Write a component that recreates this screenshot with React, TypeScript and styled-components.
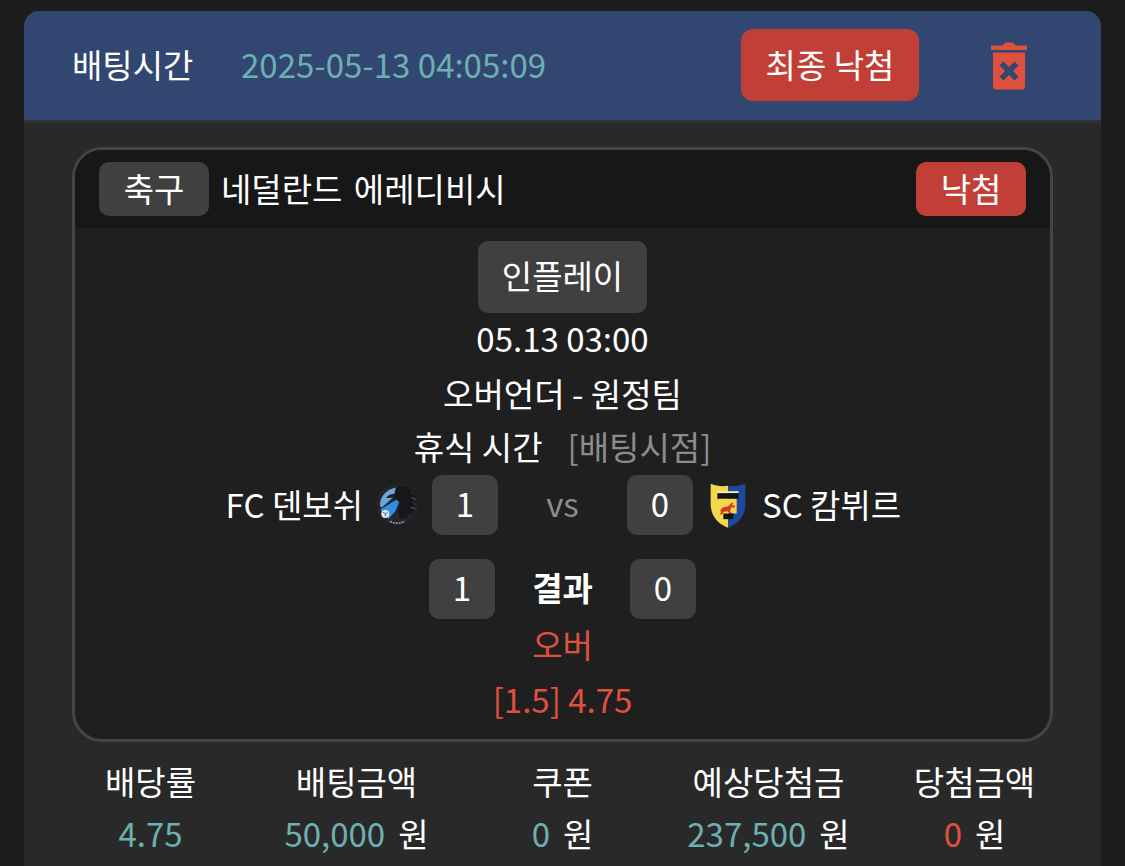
import React from "react";
import styled, { createGlobalStyle } from "styled-components";

const GlobalStyle = createGlobalStyle`
  html, body {
    margin: 0;
    height: 866px;
    overflow: hidden;
    background: #1c1c1c;
    color: #fff;
    font-family: "Noto Sans CJK KR", "Noto Sans", sans-serif;
    font-weight: 400;
  }
`;

const Page = styled.div`
  padding: 11px 24px 0;
`;

const Card = styled.div`
  background: #292929;
  border-radius: 15px 15px 0 0;
  height: 855px;
`;

const Header = styled.div`
  display: flex;
  align-items: center;
  height: 109px;
  padding: 0 72px 0 48px;
  background: #324672;
  border-radius: 15px 15px 0 0;
  border-bottom: 3px solid #333;
  font-size: 33px;
`;

const HeaderTitle = styled.span`
  width: 169px;
  padding-bottom: 4px;
`;

const HeaderTime = styled.span`
  flex: 1;
  padding-bottom: 4px;
  color: #6db0b0;
`;

const SettleButton = styled.div`
  display: flex;
  align-items: center;
  justify-content: center;
  box-sizing: border-box;
  width: 178px;
  height: 72px;
  margin: 0 70px 1px 0;
  padding-bottom: 3px;
  background: #c23f37;
  border-radius: 12px;
`;

const Match = styled.div`
  margin: 24px 48px 0;
  border: 3px solid #444;
  border-radius: 30px;
  background: #1f1f1f;
  overflow: hidden;
  height: 589px;
`;

const MatchTop = styled.div`
  display: flex;
  align-items: center;
  height: 78px;
  padding: 0 24px;
  background: #171717;
  font-size: 33px;
`;

const Tag = styled.div<{ $red?: boolean }>`
  display: flex;
  align-items: center;
  justify-content: center;
  box-sizing: border-box;
  width: 110px;
  height: 54px;
  padding-bottom: 3px;
  border-radius: 10px;
  background: ${(p) => (p.$red ? "#c23f37" : "#404040")};
`;

const League = styled.span`
  flex: 1;
  margin-left: 12px;
  padding-bottom: 3px;
  word-spacing: 4px;
`;

const MatchBody = styled.div`
  display: flex;
  flex-direction: column;
  align-items: center;
  padding-top: 13px;
  font-size: 33px;
`;

const PlayBadge = styled.div`
  display: flex;
  align-items: center;
  justify-content: center;
  box-sizing: border-box;
  width: 169px;
  height: 72px;
  padding-bottom: 4px;
  border-radius: 10px;
  background: #404040;
`;

const Line = styled.div<{ $red?: boolean }>`
  height: 53px;
  line-height: 53px;
  color: ${(p) => (p.$red ? "#e0503f" : "#fff")};
`;

const PlayDate = styled(Line)`
  margin-top: -1px;
  margin-bottom: 2px;
`;

const Muted = styled.span`
  margin-left: 25px;
  color: #8c8c8c;
`;

const ScoreRow = styled.div<{ $mid: number }>`
  display: grid;
  grid-template-columns: 1fr 66px ${(p) => p.$mid}px 66px 1fr;
  align-items: center;
  width: 100%;
  height: 60px;
  margin-top: 2px;
`;

const Score = styled.div`
  display: flex;
  align-items: center;
  justify-content: center;
  box-sizing: border-box;
  height: 60px;
  padding-bottom: 4px;
  border-radius: 10px;
  background: #404040;
`;

const Vs = styled.div`
  padding-bottom: 4px;
  text-align: center;
  color: #8c8c8c;
`;

const ResultLabel = styled.div`
  padding-bottom: 4px;
  text-align: center;
  font-weight: 700;
`;

const Team = styled.div<{ $right?: boolean }>`
  display: flex;
  align-items: center;
  justify-content: ${(p) => (p.$right ? "flex-start" : "flex-end")};
  gap: ${(p) => (p.$right ? "16px" : "13px")};
  padding: ${(p) => (p.$right ? "0 0 0 17px" : "0 14px 0 0")};
`;

const TeamName = styled.span`
  padding-bottom: 3px;
`;

const ResultRow = styled(ScoreRow)`
  margin-top: 24px;
`;

const Pick = styled(Line)`
  margin-top: -1px;
  margin-bottom: 2px;
`;

const Stats = styled.div`
  display: grid;
  grid-template-columns: repeat(5, 206px);
  justify-content: center;
  margin-top: 11px;
  font-size: 33px;
  text-align: center;
`;

const StatLabel = styled.div`
  height: 53px;
  line-height: 56px;
`;

const StatValue = styled.div<{ $red?: boolean }>`
  height: 54px;
  line-height: 54px;
  span {
    color: ${(p) => (p.$red ? "#e0503f" : "#6db0b0")};
  }
`;

const Unit = styled.span`
  margin-left: 13px;
  color: #fff !important;
`;

const TrashIcon = () => (
  <svg width="40" height="50" viewBox="0 0 40 50">
    <path
      d="M2 4.500h11.500C14.500 2.500 16 1.500 18 1.500h4c2 0 3.500 1 4.500 3H38v4.500H2z"
      fill="#e0503f"
    />
    <path
      d="M4 11.500h32V45a3.500 3.500 0 0 1-3.500 3.500h-25A3.500 3.500 0 0 1 4 45z"
      fill="#e0503f"
    />
    <path
      d="M12.500 22.500l15 15M27.500 22.500l-15 15"
      stroke="#324672"
      strokeWidth="5.500"
      fill="none"
    />
  </svg>
);

const HomeLogo = () => (
  <svg width="42" height="42" viewBox="0 0 126 126">
    <circle cx="63" cy="63" r="61" fill="#24262c" />
    <path d="M12 62C12 36 34 14 66 10L56 36 16 72z" fill="#6fa6d8" />
    <path d="M30 42c8-10 20-14 30-12l-2 12c-10-2-18 0-28 0z" fill="#1d2127" />
    <path d="M76 38 58 82 38 104C26 98 16 88 14 76z" fill="#2e8fe6" />
    <circle cx="28" cy="90" r="12" fill="#e4e8ec" />
    <path d="M21 85l7 4 7-4M28 89v8" stroke="#5d6670" strokeWidth="3" fill="none" />
    <path
      d="M62 8c16-6 34 0 46 14l-8 6 16 4 4 22-14-2 12 18-10 22-14-6 2 16-22 4-10-26 10-22-16-14c-4-12-2-28 4-36z"
      fill="#15171b"
    />
    <path d="M108 40l12 8M104 70l14 4" stroke="#4a4f58" strokeWidth="4" />
    <path
      d="M42 112c14 7 30 7 44 0"
      stroke="#8f98a2"
      strokeWidth="5"
      strokeDasharray="6 3"
      fill="none"
    />
  </svg>
);

const AwayLogo = () => (
  <svg width="36" height="45" viewBox="0 0 108 134">
    <path d="M2 2c18 8 36 8 52 6v126C24 122 4 100 2 66z" fill="#f3d84b" />
    <path d="M106 2C88 10 70 10 54 8v126c30-12 50-34 52-68z" fill="#1d4a9e" />
    <rect x="22" y="24" width="64" height="6" fill="#f6eeb8" />
    <rect x="22" y="30" width="64" height="17" fill="#141414" />
    <rect x="30" y="47" width="50" height="44" fill="#f3d84b" />
    <path
      d="M30 84c4-10 12-14 24-14l12-12 4 2-4 6 10 2-2 6-10-2-4 12 6 8h-6l-8-8-10 2-6 8h-6l4-10z"
      fill="#d5392b"
    />
    <rect x="40" y="91" width="30" height="17" fill="#141414" />
  </svg>
);

const stats = [
  { label: "배당률", value: "4.75" },
  { label: "배팅금액", value: "50,000", unit: true },
  { label: "쿠폰", value: "0", unit: true },
  { label: "예상당첨금", value: "237,500", unit: true },
  { label: "당첨금액", value: "0", unit: true, red: true },
];

const App = () => {
  return (
    <Page>
      <GlobalStyle />
      <Card>
        <Header>
          <HeaderTitle>배팅시간</HeaderTitle>
          <HeaderTime>2025-05-13 04:05:09</HeaderTime>
          <SettleButton>최종 낙첨</SettleButton>
          <TrashIcon />
        </Header>
        <Match>
          <MatchTop>
            <Tag>축구</Tag>
            <League>네덜란드 에레디비시</League>
            <Tag $red>낙첨</Tag>
          </MatchTop>
          <MatchBody>
            <PlayBadge>인플레이</PlayBadge>
            <PlayDate>05.13 03:00</PlayDate>
            <Line>오버언더 - 원정팀</Line>
            <Line>
              휴식 시간<Muted>[배팅시점]</Muted>
            </Line>
            <ScoreRow $mid={129}>
              <Team>
                <TeamName>FC 덴보쉬</TeamName>
                <HomeLogo />
              </Team>
              <Score>1</Score>
              <Vs>vs</Vs>
              <Score>0</Score>
              <Team $right>
                <AwayLogo />
                <TeamName>SC 캄뷔르</TeamName>
              </Team>
            </ScoreRow>
            <ResultRow $mid={135}>
              <span />
              <Score>1</Score>
              <ResultLabel>결과</ResultLabel>
              <Score>0</Score>
              <span />
            </ResultRow>
            <Pick $red>오버</Pick>
            <Line $red>[1.5] 4.75</Line>
          </MatchBody>
        </Match>
        <Stats>
          {stats.map((s) => (
            <div key={s.label}>
              <StatLabel>{s.label}</StatLabel>
              <StatValue $red={s.red}>
                <span>{s.value}</span>
                {s.unit ? <Unit>원</Unit> : null}
              </StatValue>
            </div>
          ))}
        </Stats>
      </Card>
    </Page>
  );
};

export default App;
